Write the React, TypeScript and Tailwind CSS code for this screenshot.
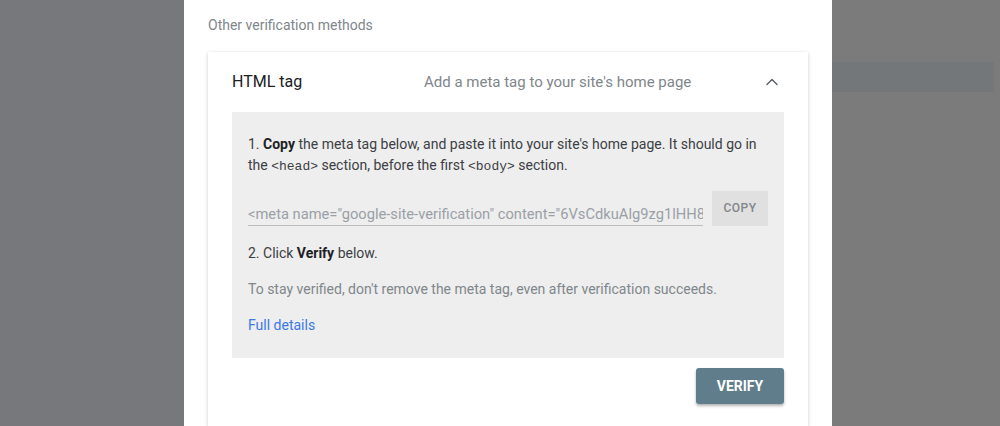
import { ChevronUp } from 'lucide-react';

const font = { fontFamily: 'Roboto, "Liberation Sans", sans-serif' };

function Code({ children }: { children: string }) {
  return <span className="text-[13px]" style={{ fontFamily: '"Liberation Mono", monospace' }}>{children}</span>;
}

export default function App() {
  return (
    <div className="flex h-[426px] w-[1000px] overflow-hidden" style={font}>
      {/* backdrop left */}
      <div className="w-[184px] shrink-0 bg-[#76787b]" />

      {/* dialog */}
      <div className="w-[648px] shrink-0 bg-white px-6">
        <p className="pt-[15px] text-[14px] leading-5 text-[#80868b]">Other verification methods</p>

        <div className="mt-[17px] bg-white px-6 shadow-[0_1px_4px_rgba(0,0,0,0.2)]">
          <div className="flex h-[60px] items-center">
            <span className="w-[192px] text-[16px] text-[#202124]">HTML tag</span>
            <span className="flex-1 text-[15px] text-[#80868b]">Add a meta tag to your site's home page</span>
            <span className="flex w-6 justify-center">
              <ChevronUp className="h-5 w-5 text-[#5f6368]" strokeWidth={1.75} />
            </span>
          </div>

          <div className="bg-[#eeeeee] px-4 pb-[22px] pt-[22px] text-[14px] leading-[21px] text-[#3c4043]">
            <p>
              1. <b className="font-bold text-[#202124]">Copy</b> the meta tag below, and paste it into your site's home page. It should go in
              the <Code>{'<head>'}</Code> section, before the first <Code>{'<body>'}</Code> section.
            </p>

            <div className="mt-[14px] flex items-center gap-[9px]">
              <div className="flex h-[35px] flex-1 items-end overflow-hidden">
                <div className="w-full overflow-hidden whitespace-nowrap border-b border-[#bdbdbd] pb-[1px] text-[14.7px] leading-[20px] text-[#9aa0a6]">
                  {'<meta name="google-site-verification" content="6VsCdkuAlg9zg1lHH8jVnXJeZsE1oWq2rTkYmPa" />'}
                </div>
              </div>
              <button className="h-[35px] w-[56px] shrink-0 bg-[#e0e0e0] text-[12px] font-medium tracking-[0.5px] text-[#80868b]">
                COPY
              </button>
            </div>

            <p className="mt-[17px]">
              2. Click <b className="font-bold text-[#202124]">Verify</b> below.
            </p>
            <p className="mt-[15px] text-[#80868b]">To stay verified, don't remove the meta tag, even after verification succeeds.</p>
            <p className="mt-[15px] text-[#3b78e7]">Full details</p>
          </div>

          <div className="flex justify-end pb-6 pt-[10px]">
            <button className="h-9 w-[88px] rounded-[3px] bg-[#607d8b] text-[14px] font-bold text-white shadow-[0_2px_3px_rgba(0,0,0,0.3)]">
              VERIFY
            </button>
          </div>
        </div>
      </div>

      {/* backdrop right */}
      <div className="flex-1 bg-[#7b7b7b] pt-[62px]">
        <div className="h-[30px] w-[162px] bg-[#74777a]" />
      </div>
    </div>
  );
}
